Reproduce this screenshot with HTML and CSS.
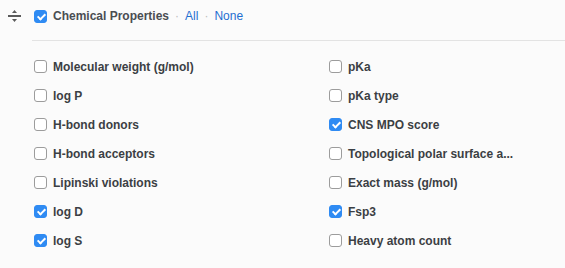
FILE: index.html
```html
<!DOCTYPE html>
<html lang="en">
<head>
    <meta charset="UTF-8">
    <meta name="viewport" content="width=device-width, initial-scale=1.0">
    <title>Chemical Properties</title>
    <link rel="stylesheet" href="styles.css">
</head>
<body>
    <div class="section">
        <div class="section-header">
            <span class="toggle">
                <svg width="13" height="14" viewBox="0 0 13 14">
                    <path d="M6.5 1 L9 4 L4 4 Z" fill="#5a5a5a"/>
                    <rect x="0" y="6" width="13" height="2" fill="#5a5a5a"/>
                    <path d="M4 10 L9 10 L6.5 13 Z" fill="#5a5a5a"/>
                </svg>
            </span>
            <label class="group-title">
                <input type="checkbox" class="cb" checked>
                <span>Chemical Properties</span>
            </label>
            <span class="sep">&middot;</span>
            <a href="#" class="link">All</a>
            <span class="sep">&middot;</span>
            <a href="#" class="link">None</a>
        </div>
        <div class="divider"></div>
        <div class="options">
            <label class="option"><input type="checkbox" class="cb"><span>Molecular weight (g/mol)</span></label>
            <label class="option"><input type="checkbox" class="cb"><span>pKa</span></label>
            <label class="option"><input type="checkbox" class="cb"><span>log P</span></label>
            <label class="option"><input type="checkbox" class="cb"><span>pKa type</span></label>
            <label class="option"><input type="checkbox" class="cb"><span>H-bond donors</span></label>
            <label class="option"><input type="checkbox" class="cb" checked><span>CNS MPO score</span></label>
            <label class="option"><input type="checkbox" class="cb"><span>H-bond acceptors</span></label>
            <label class="option" title="Topological polar surface area"><input type="checkbox" class="cb"><span>Topological polar surface a...</span></label>
            <label class="option"><input type="checkbox" class="cb"><span>Lipinski violations</span></label>
            <label class="option"><input type="checkbox" class="cb"><span>Exact mass (g/mol)</span></label>
            <label class="option"><input type="checkbox" class="cb" checked><span>log D</span></label>
            <label class="option"><input type="checkbox" class="cb" checked><span>Fsp3</span></label>
            <label class="option"><input type="checkbox" class="cb" checked><span>log S</span></label>
            <label class="option"><input type="checkbox" class="cb"><span>Heavy atom count</span></label>
        </div>
    </div>
</body>
</html>
```

FILE: styles.css
```css
body {
    font-family: 'Liberation Sans', Helvetica, Arial, sans-serif;
    font-size: 12px;
    background-color: #fbfbfb;
    color: #3b3f44;
    margin: 0;
}
.section-header {
    display: flex;
    align-items: center;
    height: 32px;
    padding-left: 8px;
}
.toggle {
    display: flex;
    width: 13px;
    margin-right: 13px;
}
.group-title {
    display: flex;
    align-items: center;
    gap: 6px;
    font-weight: bold;
    color: #4a4d52;
}
.sep {
    color: #bdbdbd;
    margin: 0 6px;
}
.link {
    color: #1f6fd1;
    text-decoration: none;
}
.divider {
    margin: 8px 0 0 32px;
    border-top: 1px solid #e3e3e3;
}
.options {
    display: grid;
    grid-template-columns: 295px 1fr;
    grid-auto-rows: 29px;
    padding: 11px 0 0 34px;
}
.option {
    display: flex;
    align-items: center;
    gap: 6px;
    font-weight: bold;
}
.cb {
    appearance: none;
    -webkit-appearance: none;
    box-sizing: border-box;
    width: 13px;
    height: 13px;
    margin: 0;
    border: 1px solid #9c9c9c;
    border-radius: 3px;
    background: #fff;
    position: relative;
    flex-shrink: 0;
}
.cb:checked {
    background: #2f8bf3;
    border-color: #2f8bf3;
}
.cb:checked::after {
    content: '';
    position: absolute;
    left: 3.5px;
    top: 1px;
    width: 3px;
    height: 6px;
    border: solid #fff;
    border-width: 0 2px 2px 0;
    transform: rotate(45deg);
}
```
